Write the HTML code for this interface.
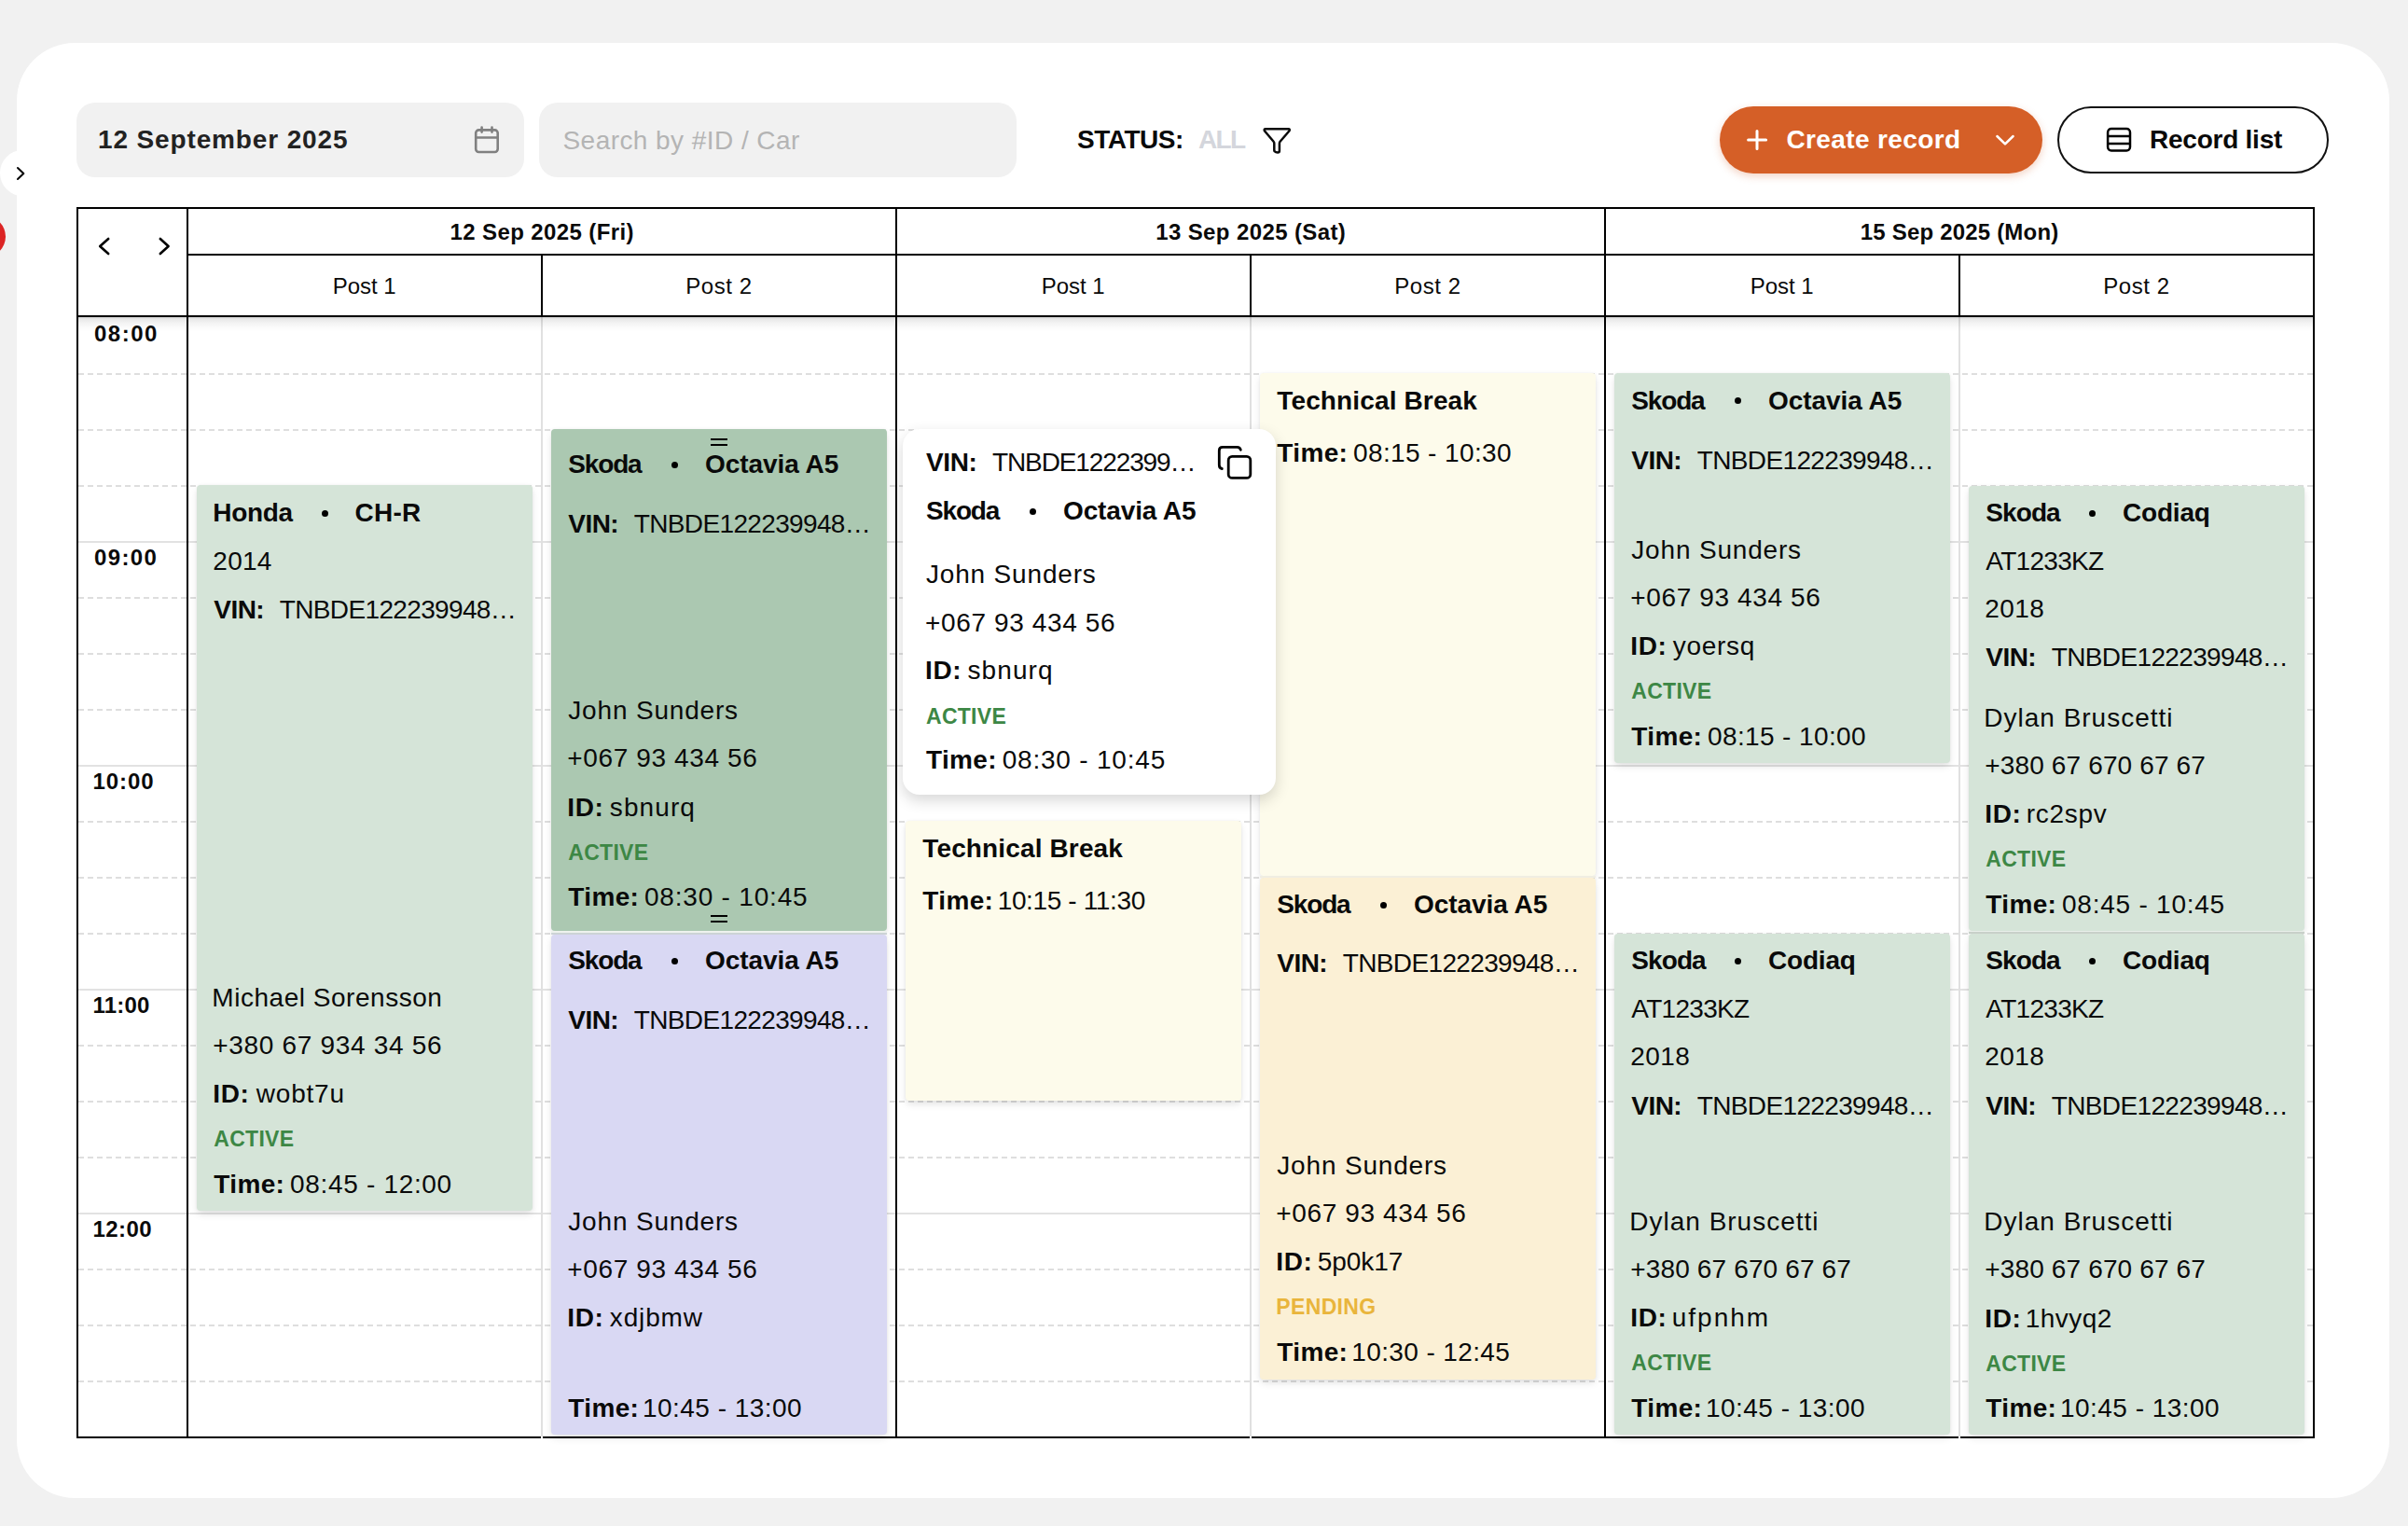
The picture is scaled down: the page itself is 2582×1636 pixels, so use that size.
<!DOCTYPE html>
<html><head><meta charset="utf-8"><title>Schedule</title>
<style>
html,body{margin:0;padding:0;}
body{width:2582px;height:1636px;background:#f1f1f1;position:relative;overflow:hidden;font-family:"Liberation Sans",sans-serif;color:#0a0a0a;}
.t{position:absolute;white-space:nowrap;}
.abs{position:absolute;}
.card{position:absolute;border-radius:4px;box-shadow:0 4px 8px -1px rgba(0,0,0,0.13), 0 0 3px rgba(0,0,0,0.05);}
.hl{position:absolute;height:2px;background:#000;}
.vl{position:absolute;width:2px;background:#000;}
</style></head><body>

<div class="abs" style="left:18px;top:46px;width:2544px;height:1560px;background:#fff;border-radius:62px;"></div>
<div class="abs" style="left:0px;top:161px;width:48px;height:49px;border-radius:50%;background:#fff;"></div>
<svg class="abs" style="left:0;top:0" width="60" height="300"><path d="M19 180 L25.3 186 L19 192" fill="none" stroke="#0a0a0a" stroke-width="2.1" stroke-linecap="round" stroke-linejoin="round"/><circle cx="-16" cy="253.6" r="22" fill="#dc2424"/></svg>
<div class="abs" style="left:82px;top:110px;width:480px;height:80px;background:#f1f1f1;border-radius:20px;"></div>
<div class="abs" style="left:578px;top:110px;width:512px;height:80px;background:#f1f1f1;border-radius:20px;"></div>
<svg class="abs" style="left:500px;top:128px" width="44" height="44"><g fill="none" stroke="#808080" stroke-width="2.6" stroke-linecap="round"><rect x="10.2" y="11.4" width="23.5" height="23.6" rx="3.2"/><path d="M10.2 19.5 H33.7 M16.6 8.6 V13.6 M27.5 8.6 V13.6"/></g></svg>
<svg class="abs" style="left:1345px;top:128px" width="48" height="44"><path d="M12 10.2 H36.6 Q38.4 10.2 37.5 12.2 L27.6 23.8 Q26.9 24.6 26.9 25.8 V33.6 Q26.9 35.6 25 35.6 Q22.9 35.6 21.6 34.2 Q21.3 33.8 21.3 33 V25.8 Q21.3 24.6 20.6 23.8 L10.9 12.2 Q10.1 10.2 12 10.2 Z" fill="none" stroke="#0a0a0a" stroke-width="2.5" stroke-linejoin="round"/></svg>
<div class="abs" style="left:1844px;top:114px;width:346px;height:72px;background:#d55f27;border-radius:36px;box-shadow:0 3px 8px rgba(213,95,39,0.28);"></div>
<svg class="abs" style="left:1860px;top:125px" width="320" height="50"><g fill="none" stroke="#fff" stroke-width="3" stroke-linecap="round" stroke-linejoin="round"><path d="M14.6 25 H33.6 M24 15.6 V34.4"/><path d="M281.4 21 L290 29.4 L298.6 21" stroke-width="2.5"/></g></svg>
<div class="abs" style="left:2206px;top:114px;width:287px;height:68px;border:2px solid #111;border-radius:36px;background:#fff;"></div>
<svg class="abs" style="left:2250px;top:128px" width="44" height="44"><g fill="none" stroke="#000" stroke-width="2.5"><rect x="10.1" y="10.1" width="23.9" height="23.3" rx="3.8"/><path d="M10.1 18 H34 M10.1 25.9 H34"/></g></svg>
<div class="abs" style="left:84px;top:400px;width:2396px;height:2px;background-image:linear-gradient(to right,#dedede 0,#dedede 6px,transparent 6px,transparent 10px);background-size:10px 2px;"></div>
<div class="abs" style="left:84px;top:460px;width:2396px;height:2px;background-image:linear-gradient(to right,#dedede 0,#dedede 6px,transparent 6px,transparent 10px);background-size:10px 2px;"></div>
<div class="abs" style="left:84px;top:520px;width:2396px;height:2px;background-image:linear-gradient(to right,#dedede 0,#dedede 6px,transparent 6px,transparent 10px);background-size:10px 2px;"></div>
<div class="abs" style="left:84px;top:580px;width:2396px;height:2px;background:#e2e2e2;"></div>
<div class="abs" style="left:84px;top:640px;width:2396px;height:2px;background-image:linear-gradient(to right,#dedede 0,#dedede 6px,transparent 6px,transparent 10px);background-size:10px 2px;"></div>
<div class="abs" style="left:84px;top:700px;width:2396px;height:2px;background-image:linear-gradient(to right,#dedede 0,#dedede 6px,transparent 6px,transparent 10px);background-size:10px 2px;"></div>
<div class="abs" style="left:84px;top:760px;width:2396px;height:2px;background-image:linear-gradient(to right,#dedede 0,#dedede 6px,transparent 6px,transparent 10px);background-size:10px 2px;"></div>
<div class="abs" style="left:84px;top:820px;width:2396px;height:2px;background:#e2e2e2;"></div>
<div class="abs" style="left:84px;top:880px;width:2396px;height:2px;background-image:linear-gradient(to right,#dedede 0,#dedede 6px,transparent 6px,transparent 10px);background-size:10px 2px;"></div>
<div class="abs" style="left:84px;top:940px;width:2396px;height:2px;background-image:linear-gradient(to right,#dedede 0,#dedede 6px,transparent 6px,transparent 10px);background-size:10px 2px;"></div>
<div class="abs" style="left:84px;top:1000px;width:2396px;height:2px;background-image:linear-gradient(to right,#dedede 0,#dedede 6px,transparent 6px,transparent 10px);background-size:10px 2px;"></div>
<div class="abs" style="left:84px;top:1060px;width:2396px;height:2px;background:#e2e2e2;"></div>
<div class="abs" style="left:84px;top:1120px;width:2396px;height:2px;background-image:linear-gradient(to right,#dedede 0,#dedede 6px,transparent 6px,transparent 10px);background-size:10px 2px;"></div>
<div class="abs" style="left:84px;top:1180px;width:2396px;height:2px;background-image:linear-gradient(to right,#dedede 0,#dedede 6px,transparent 6px,transparent 10px);background-size:10px 2px;"></div>
<div class="abs" style="left:84px;top:1240px;width:2396px;height:2px;background-image:linear-gradient(to right,#dedede 0,#dedede 6px,transparent 6px,transparent 10px);background-size:10px 2px;"></div>
<div class="abs" style="left:84px;top:1300px;width:2396px;height:2px;background:#e2e2e2;"></div>
<div class="abs" style="left:84px;top:1360px;width:2396px;height:2px;background-image:linear-gradient(to right,#dedede 0,#dedede 6px,transparent 6px,transparent 10px);background-size:10px 2px;"></div>
<div class="abs" style="left:84px;top:1420px;width:2396px;height:2px;background-image:linear-gradient(to right,#dedede 0,#dedede 6px,transparent 6px,transparent 10px);background-size:10px 2px;"></div>
<div class="abs" style="left:84px;top:1480px;width:2396px;height:2px;background-image:linear-gradient(to right,#dedede 0,#dedede 6px,transparent 6px,transparent 10px);background-size:10px 2px;"></div>
<div class="abs" style="left:580px;top:340px;width:2px;height:1200px;background:#e0e0e0;"></div>
<div class="abs" style="left:1340px;top:340px;width:2px;height:1200px;background:#e0e0e0;"></div>
<div class="abs" style="left:2100px;top:340px;width:2px;height:1200px;background:#e0e0e0;"></div>
<div class="abs" style="left:84px;top:340px;width:2396px;height:16px;background:linear-gradient(to bottom,rgba(0,0,0,0.18) 0,rgba(0,0,0,0.09) 2px,rgba(0,0,0,0.05) 6px,rgba(0,0,0,0.015) 11px,rgba(0,0,0,0) 16px);"></div>
<div class="abs" style="left:82px;top:222px;width:2400px;height:1320px;border:2px solid #000;box-sizing:border-box;"></div>
<div class="vl" style="left:200px;top:222px;height:1320px;"></div>
<div class="vl" style="left:960px;top:222px;height:1320px;"></div>
<div class="vl" style="left:1720px;top:222px;height:1320px;"></div>
<div class="hl" style="left:200px;top:272px;width:2281px;"></div>
<div class="hl" style="left:82px;top:338px;width:2399px;"></div>
<div class="vl" style="left:580px;top:272px;height:68px;"></div>
<div class="vl" style="left:1340px;top:272px;height:68px;"></div>
<div class="vl" style="left:2100px;top:272px;height:68px;"></div>
<div class="abs" style="left:580px;top:1540px;width:2px;height:2px;background:#fff;"></div>
<div class="abs" style="left:1340px;top:1540px;width:2px;height:2px;background:#fff;"></div>
<div class="abs" style="left:2100px;top:1540px;width:2px;height:2px;background:#fff;"></div>
<svg class="abs" style="left:90px;top:240px" width="110" height="50"><g fill="none" stroke="#000" stroke-width="2.6" stroke-linecap="round" stroke-linejoin="round"><path d="M26.2 16 L17.2 24 L26.2 32"/><path d="M81.8 16 L90.6 24 L81.8 32"/></g></svg>
<div class="card" style="left:211.0px;top:520px;width:360px;height:778px;background:#d5e4d8;"></div>
<div class="card" style="left:591.0px;top:460px;width:360px;height:538px;background:#abc8b1;"></div>
<div class="card" style="left:591.0px;top:1002px;width:360px;height:536px;background:#d9d8f3;"></div>
<div class="card" style="left:971.0px;top:880px;width:360px;height:300px;background:#fdfbeb;"></div>
<div class="card" style="left:1351.0px;top:400px;width:360px;height:539px;background:#fdfbeb;"></div>
<div class="card" style="left:1351.0px;top:941px;width:360px;height:538px;background:#fbf0d5;"></div>
<div class="card" style="left:1731.0px;top:400px;width:360px;height:418px;background:#d5e4d8;"></div>
<div class="card" style="left:1731.0px;top:1001px;width:360px;height:537px;background:#d5e4d8;"></div>
<div class="card" style="left:2111.0px;top:521px;width:360px;height:477px;background:#d5e4d8;"></div>
<div class="card" style="left:2111.0px;top:1001px;width:360px;height:537px;background:#d5e4d8;"></div>
<div class="abs" style="left:591px;top:998px;width:360px;height:4px;background:linear-gradient(to bottom,#eef2ee 0,#eef2ee 50%,#cdd3d6 50%,#cdd3d6 100%);"></div>
<div class="abs" style="left:2111px;top:998px;width:360px;height:3px;background:linear-gradient(to bottom,#e9efea 0,#e9efea 40%,#c8d0c9 40%,#c8d0c9 100%);"></div>
<div class="abs" style="left:1351px;top:939px;width:360px;height:2px;background:#f0eee2;"></div>
<div class="abs" style="left:968px;top:460px;width:400px;height:392px;background:#fff;border-radius:18px;box-shadow:0 6px 16px rgba(0,0,0,0.16);"></div>
<div class="abs" style="left:762.0px;top:470px;width:18px;height:2px;background:#000;"></div>
<div class="abs" style="left:762.0px;top:476px;width:18px;height:2px;background:#000;"></div>
<div class="abs" style="left:762.0px;top:981px;width:18px;height:2px;background:#000;"></div>
<div class="abs" style="left:762.0px;top:987px;width:18px;height:2px;background:#000;"></div>
<div class="abs" style="left:345.0px;top:546.5px;width:7px;height:7px;border-radius:50%;background:#000;"></div>
<div class="abs" style="left:720.0px;top:494.5px;width:7px;height:7px;border-radius:50%;background:#000;"></div>
<div class="abs" style="left:720.0px;top:1026.5px;width:7px;height:7px;border-radius:50%;background:#000;"></div>
<div class="abs" style="left:1480.0px;top:966.5px;width:7px;height:7px;border-radius:50%;background:#000;"></div>
<div class="abs" style="left:1860.0px;top:426.0px;width:7px;height:7px;border-radius:50%;background:#000;"></div>
<div class="abs" style="left:1860.0px;top:1026.5px;width:7px;height:7px;border-radius:50%;background:#000;"></div>
<div class="abs" style="left:2240.0px;top:546.5px;width:7px;height:7px;border-radius:50%;background:#000;"></div>
<div class="abs" style="left:2240.0px;top:1026.5px;width:7px;height:7px;border-radius:50%;background:#000;"></div>
<div class="abs" style="left:1103.5px;top:544.5px;width:7px;height:7px;border-radius:50%;background:#000;"></div>
<svg class="abs" style="left:1295px;top:465px" width="60" height="60"><g fill="none" stroke="#000" stroke-width="2.8" stroke-linecap="round"><rect x="22.2" y="24.4" width="23.6" height="23" rx="4"/><path d="M15.3 37.5 Q12.3 37 12.3 33.5 V18 Q12.3 14.3 16 14.3 H31.5 Q34.6 14.3 35.3 17.3"/></g></svg>
<div class="t" style="left:105.00px;top:136.00px;font-size:28px;line-height:28px;font-weight:700;letter-spacing:0.866px;color:#222;">12 September 2025</div>
<div class="t" style="left:603.50px;top:137.00px;font-size:28px;line-height:28px;letter-spacing:0.442px;color:#b4b4b4;">Search by #ID / Car</div>
<div class="t" style="left:1155.00px;top:136.00px;font-size:28px;line-height:28px;font-weight:700;letter-spacing:-0.474px;">STATUS:</div>
<div class="t" style="left:1285.00px;top:136.00px;font-size:28px;line-height:28px;font-weight:700;letter-spacing:-1.662px;color:#d4d6dc;">ALL</div>
<div class="t" style="left:1915.50px;top:136.00px;font-size:28px;line-height:28px;font-weight:700;letter-spacing:0.377px;color:#fff;">Create record</div>
<div class="t" style="left:2305.00px;top:136.00px;font-size:28px;line-height:28px;font-weight:700;letter-spacing:-0.238px;">Record list</div>
<div class="t" style="left:482.50px;top:237.00px;font-size:24px;line-height:24px;font-weight:700;letter-spacing:0.390px;">12 Sep 2025 (Fri)</div>
<div class="t" style="left:1239.15px;top:237.00px;font-size:24px;line-height:24px;font-weight:700;letter-spacing:0.391px;">13 Sep 2025 (Sat)</div>
<div class="t" style="left:1994.75px;top:237.00px;font-size:24px;line-height:24px;font-weight:700;letter-spacing:0.193px;">15 Sep 2025 (Mon)</div>
<div class="t" style="left:356.80px;top:295.00px;font-size:24px;line-height:24px;letter-spacing:-0.058px;">Post 1</div>
<div class="t" style="left:735.20px;top:295.00px;font-size:24px;line-height:24px;letter-spacing:0.582px;">Post 2</div>
<div class="t" style="left:1116.80px;top:295.00px;font-size:24px;line-height:24px;letter-spacing:-0.058px;">Post 1</div>
<div class="t" style="left:1495.20px;top:295.00px;font-size:24px;line-height:24px;letter-spacing:0.582px;">Post 2</div>
<div class="t" style="left:1876.80px;top:295.00px;font-size:24px;line-height:24px;letter-spacing:-0.058px;">Post 1</div>
<div class="t" style="left:2255.20px;top:295.00px;font-size:24px;line-height:24px;letter-spacing:0.582px;">Post 2</div>
<div class="t" style="left:101.00px;top:346.00px;font-size:24px;line-height:24px;font-weight:700;letter-spacing:1.491px;">08:00</div>
<div class="t" style="left:101.00px;top:586.00px;font-size:24px;line-height:24px;font-weight:700;letter-spacing:1.366px;">09:00</div>
<div class="t" style="left:99.60px;top:826.00px;font-size:24px;line-height:24px;font-weight:700;letter-spacing:0.916px;">10:00</div>
<div class="t" style="left:99.60px;top:1066.00px;font-size:24px;line-height:24px;font-weight:700;letter-spacing:0.147px;">11:00</div>
<div class="t" style="left:99.60px;top:1306.00px;font-size:24px;line-height:24px;font-weight:700;letter-spacing:0.391px;">12:00</div>
<div class="t" style="left:228.30px;top:536.00px;font-size:28px;line-height:28px;font-weight:700;letter-spacing:-0.308px;">Honda</div>
<div class="t" style="left:380.50px;top:536.00px;font-size:28px;line-height:28px;font-weight:700;letter-spacing:0.245px;">CH-R</div>
<div class="t" style="left:228.30px;top:588.00px;font-size:28px;line-height:28px;letter-spacing:0.261px;">2014</div>
<div class="t" style="left:229.30px;top:640.00px;font-size:28px;line-height:28px;font-weight:700;letter-spacing:-0.559px;">VIN:</div>
<div class="t" style="left:299.80px;top:640.00px;font-size:28px;line-height:28px;letter-spacing:-0.646px;">TNBDE122239948…</div>
<div class="t" style="left:227.30px;top:1056.00px;font-size:28px;line-height:28px;letter-spacing:0.528px;">Michael Sorensson</div>
<div class="t" style="left:228.30px;top:1107.00px;font-size:28px;line-height:28px;letter-spacing:0.677px;">+380 67 934 34 56</div>
<div class="t" style="left:228.30px;top:1159.00px;font-size:28px;line-height:28px;font-weight:700;letter-spacing:0.650px;">ID:</div>
<div class="t" style="left:274.80px;top:1159.00px;font-size:28px;line-height:28px;letter-spacing:0.777px;">wobt7u</div>
<div class="t" style="left:229.30px;top:1210.00px;font-size:23px;line-height:23px;font-weight:700;letter-spacing:0.280px;color:#3d8745;">ACTIVE</div>
<div class="t" style="left:229.30px;top:1256.00px;font-size:28px;line-height:28px;font-weight:700;letter-spacing:0.364px;">Time:</div>
<div class="t" style="left:311.00px;top:1256.00px;font-size:28px;line-height:28px;letter-spacing:0.679px;">08:45 - 12:00</div>
<div class="t" style="left:609.30px;top:484.00px;font-size:28px;line-height:28px;font-weight:700;letter-spacing:-1.164px;">Skoda</div>
<div class="t" style="left:755.90px;top:484.00px;font-size:28px;line-height:28px;font-weight:700;letter-spacing:-0.041px;">Octavia A5</div>
<div class="t" style="left:609.30px;top:548.00px;font-size:28px;line-height:28px;font-weight:700;letter-spacing:-0.559px;">VIN:</div>
<div class="t" style="left:679.80px;top:548.00px;font-size:28px;line-height:28px;letter-spacing:-0.646px;">TNBDE122239948…</div>
<div class="t" style="left:609.30px;top:748.00px;font-size:28px;line-height:28px;letter-spacing:0.820px;">John Sunders</div>
<div class="t" style="left:608.30px;top:799.00px;font-size:28px;line-height:28px;letter-spacing:0.628px;">+067 93 434 56</div>
<div class="t" style="left:608.30px;top:852.00px;font-size:28px;line-height:28px;font-weight:700;letter-spacing:0.650px;">ID:</div>
<div class="t" style="left:653.80px;top:852.00px;font-size:28px;line-height:28px;letter-spacing:1.092px;">sbnurq</div>
<div class="t" style="left:609.30px;top:903.00px;font-size:23px;line-height:23px;font-weight:700;letter-spacing:0.280px;color:#3d8745;">ACTIVE</div>
<div class="t" style="left:609.30px;top:948.00px;font-size:28px;line-height:28px;font-weight:700;letter-spacing:0.364px;">Time:</div>
<div class="t" style="left:691.00px;top:948.00px;font-size:28px;line-height:28px;letter-spacing:0.796px;">08:30 - 10:45</div>
<div class="t" style="left:609.30px;top:1016.00px;font-size:28px;line-height:28px;font-weight:700;letter-spacing:-1.164px;">Skoda</div>
<div class="t" style="left:755.90px;top:1016.00px;font-size:28px;line-height:28px;font-weight:700;letter-spacing:-0.041px;">Octavia A5</div>
<div class="t" style="left:609.30px;top:1080.00px;font-size:28px;line-height:28px;font-weight:700;letter-spacing:-0.559px;">VIN:</div>
<div class="t" style="left:679.80px;top:1080.00px;font-size:28px;line-height:28px;letter-spacing:-0.646px;">TNBDE122239948…</div>
<div class="t" style="left:609.30px;top:1296.00px;font-size:28px;line-height:28px;letter-spacing:0.820px;">John Sunders</div>
<div class="t" style="left:608.30px;top:1347.00px;font-size:28px;line-height:28px;letter-spacing:0.628px;">+067 93 434 56</div>
<div class="t" style="left:608.30px;top:1399.00px;font-size:28px;line-height:28px;font-weight:700;letter-spacing:0.650px;">ID:</div>
<div class="t" style="left:653.80px;top:1399.00px;font-size:28px;line-height:28px;letter-spacing:0.862px;">xdjbmw</div>
<div class="t" style="left:609.30px;top:1496.00px;font-size:28px;line-height:28px;font-weight:700;letter-spacing:0.364px;">Time:</div>
<div class="t" style="left:689.00px;top:1496.00px;font-size:28px;line-height:28px;letter-spacing:0.463px;">10:45 - 13:00</div>
<div class="t" style="left:989.30px;top:896.00px;font-size:28px;line-height:28px;font-weight:700;letter-spacing:0.134px;">Technical Break</div>
<div class="t" style="left:989.30px;top:952.00px;font-size:28px;line-height:28px;font-weight:700;letter-spacing:0.364px;">Time:</div>
<div class="t" style="left:1069.70px;top:952.00px;font-size:28px;line-height:28px;letter-spacing:-0.364px;">10:15 - 11:30</div>
<div class="t" style="left:1369.30px;top:416.00px;font-size:28px;line-height:28px;font-weight:700;letter-spacing:0.134px;">Technical Break</div>
<div class="t" style="left:1369.30px;top:472.00px;font-size:28px;line-height:28px;font-weight:700;letter-spacing:0.364px;">Time:</div>
<div class="t" style="left:1451.00px;top:472.00px;font-size:28px;line-height:28px;letter-spacing:0.379px;">08:15 - 10:30</div>
<div class="t" style="left:1369.30px;top:956.00px;font-size:28px;line-height:28px;font-weight:700;letter-spacing:-1.164px;">Skoda</div>
<div class="t" style="left:1515.90px;top:956.00px;font-size:28px;line-height:28px;font-weight:700;letter-spacing:-0.041px;">Octavia A5</div>
<div class="t" style="left:1369.30px;top:1019.00px;font-size:28px;line-height:28px;font-weight:700;letter-spacing:-0.559px;">VIN:</div>
<div class="t" style="left:1439.80px;top:1019.00px;font-size:28px;line-height:28px;letter-spacing:-0.646px;">TNBDE122239948…</div>
<div class="t" style="left:1369.30px;top:1236.00px;font-size:28px;line-height:28px;letter-spacing:0.820px;">John Sunders</div>
<div class="t" style="left:1368.30px;top:1287.00px;font-size:28px;line-height:28px;letter-spacing:0.628px;">+067 93 434 56</div>
<div class="t" style="left:1368.30px;top:1339.00px;font-size:28px;line-height:28px;font-weight:700;letter-spacing:0.650px;">ID:</div>
<div class="t" style="left:1412.80px;top:1339.00px;font-size:28px;line-height:28px;letter-spacing:-0.058px;">5p0k17</div>
<div class="t" style="left:1368.30px;top:1390.00px;font-size:23px;line-height:23px;font-weight:700;letter-spacing:0.350px;color:#e9b53c;">PENDING</div>
<div class="t" style="left:1369.30px;top:1436.00px;font-size:28px;line-height:28px;font-weight:700;letter-spacing:0.364px;">Time:</div>
<div class="t" style="left:1449.30px;top:1436.00px;font-size:28px;line-height:28px;letter-spacing:0.379px;">10:30 - 12:45</div>
<div class="t" style="left:1749.30px;top:415.50px;font-size:28px;line-height:28px;font-weight:700;letter-spacing:-1.164px;">Skoda</div>
<div class="t" style="left:1895.90px;top:415.50px;font-size:28px;line-height:28px;font-weight:700;letter-spacing:-0.041px;">Octavia A5</div>
<div class="t" style="left:1749.30px;top:480.00px;font-size:28px;line-height:28px;font-weight:700;letter-spacing:-0.559px;">VIN:</div>
<div class="t" style="left:1819.80px;top:480.00px;font-size:28px;line-height:28px;letter-spacing:-0.646px;">TNBDE122239948…</div>
<div class="t" style="left:1749.30px;top:576.00px;font-size:28px;line-height:28px;letter-spacing:0.820px;">John Sunders</div>
<div class="t" style="left:1748.30px;top:627.00px;font-size:28px;line-height:28px;letter-spacing:0.628px;">+067 93 434 56</div>
<div class="t" style="left:1748.30px;top:679.00px;font-size:28px;line-height:28px;font-weight:700;letter-spacing:0.650px;">ID:</div>
<div class="t" style="left:1793.80px;top:679.00px;font-size:28px;line-height:28px;letter-spacing:0.706px;">yoersq</div>
<div class="t" style="left:1749.30px;top:730.00px;font-size:23px;line-height:23px;font-weight:700;letter-spacing:0.280px;color:#3d8745;">ACTIVE</div>
<div class="t" style="left:1749.30px;top:776.00px;font-size:28px;line-height:28px;font-weight:700;letter-spacing:0.364px;">Time:</div>
<div class="t" style="left:1831.00px;top:776.00px;font-size:28px;line-height:28px;letter-spacing:0.379px;">08:15 - 10:00</div>
<div class="t" style="left:1749.30px;top:1016.00px;font-size:28px;line-height:28px;font-weight:700;letter-spacing:-0.914px;">Skoda</div>
<div class="t" style="left:1896.10px;top:1016.00px;font-size:28px;line-height:28px;font-weight:700;letter-spacing:-0.216px;">Codiaq</div>
<div class="t" style="left:1749.30px;top:1067.50px;font-size:28px;line-height:28px;letter-spacing:-0.709px;">AT1233KZ</div>
<div class="t" style="left:1748.30px;top:1119.00px;font-size:28px;line-height:28px;letter-spacing:0.428px;">2018</div>
<div class="t" style="left:1749.30px;top:1171.70px;font-size:28px;line-height:28px;font-weight:700;letter-spacing:-0.559px;">VIN:</div>
<div class="t" style="left:1819.80px;top:1171.70px;font-size:28px;line-height:28px;letter-spacing:-0.646px;">TNBDE122239948…</div>
<div class="t" style="left:1747.30px;top:1296.00px;font-size:28px;line-height:28px;letter-spacing:0.995px;">Dylan Bruscetti</div>
<div class="t" style="left:1748.30px;top:1347.00px;font-size:28px;line-height:28px;letter-spacing:0.140px;">+380 67 670 67 67</div>
<div class="t" style="left:1748.30px;top:1399.00px;font-size:28px;line-height:28px;font-weight:700;letter-spacing:0.650px;">ID:</div>
<div class="t" style="left:1792.80px;top:1399.00px;font-size:28px;line-height:28px;letter-spacing:1.986px;">ufpnhm</div>
<div class="t" style="left:1749.30px;top:1450.40px;font-size:23px;line-height:23px;font-weight:700;letter-spacing:0.280px;color:#3d8745;">ACTIVE</div>
<div class="t" style="left:1749.30px;top:1496.00px;font-size:28px;line-height:28px;font-weight:700;letter-spacing:0.364px;">Time:</div>
<div class="t" style="left:1829.00px;top:1496.00px;font-size:28px;line-height:28px;letter-spacing:0.463px;">10:45 - 13:00</div>
<div class="t" style="left:2129.30px;top:536.00px;font-size:28px;line-height:28px;font-weight:700;letter-spacing:-0.914px;">Skoda</div>
<div class="t" style="left:2276.10px;top:536.00px;font-size:28px;line-height:28px;font-weight:700;letter-spacing:-0.216px;">Codiaq</div>
<div class="t" style="left:2129.30px;top:588.00px;font-size:28px;line-height:28px;letter-spacing:-0.709px;">AT1233KZ</div>
<div class="t" style="left:2128.30px;top:639.40px;font-size:28px;line-height:28px;letter-spacing:0.428px;">2018</div>
<div class="t" style="left:2129.30px;top:691.40px;font-size:28px;line-height:28px;font-weight:700;letter-spacing:-0.559px;">VIN:</div>
<div class="t" style="left:2199.80px;top:691.40px;font-size:28px;line-height:28px;letter-spacing:-0.646px;">TNBDE122239948…</div>
<div class="t" style="left:2127.30px;top:756.00px;font-size:28px;line-height:28px;letter-spacing:0.995px;">Dylan Bruscetti</div>
<div class="t" style="left:2128.30px;top:807.30px;font-size:28px;line-height:28px;letter-spacing:0.140px;">+380 67 670 67 67</div>
<div class="t" style="left:2128.30px;top:859.20px;font-size:28px;line-height:28px;font-weight:700;letter-spacing:0.650px;">ID:</div>
<div class="t" style="left:2172.80px;top:859.20px;font-size:28px;line-height:28px;letter-spacing:0.706px;">rc2spv</div>
<div class="t" style="left:2129.30px;top:910.40px;font-size:23px;line-height:23px;font-weight:700;letter-spacing:0.280px;color:#3d8745;">ACTIVE</div>
<div class="t" style="left:2129.30px;top:956.00px;font-size:28px;line-height:28px;font-weight:700;letter-spacing:0.364px;">Time:</div>
<div class="t" style="left:2211.00px;top:956.00px;font-size:28px;line-height:28px;letter-spacing:0.763px;">08:45 - 10:45</div>
<div class="t" style="left:2129.30px;top:1016.00px;font-size:28px;line-height:28px;font-weight:700;letter-spacing:-0.914px;">Skoda</div>
<div class="t" style="left:2276.10px;top:1016.00px;font-size:28px;line-height:28px;font-weight:700;letter-spacing:-0.216px;">Codiaq</div>
<div class="t" style="left:2129.30px;top:1067.50px;font-size:28px;line-height:28px;letter-spacing:-0.709px;">AT1233KZ</div>
<div class="t" style="left:2128.30px;top:1119.00px;font-size:28px;line-height:28px;letter-spacing:0.428px;">2018</div>
<div class="t" style="left:2129.30px;top:1171.70px;font-size:28px;line-height:28px;font-weight:700;letter-spacing:-0.559px;">VIN:</div>
<div class="t" style="left:2199.80px;top:1171.70px;font-size:28px;line-height:28px;letter-spacing:-0.646px;">TNBDE122239948…</div>
<div class="t" style="left:2127.30px;top:1296.00px;font-size:28px;line-height:28px;letter-spacing:0.995px;">Dylan Bruscetti</div>
<div class="t" style="left:2128.30px;top:1347.00px;font-size:28px;line-height:28px;letter-spacing:0.140px;">+380 67 670 67 67</div>
<div class="t" style="left:2128.30px;top:1399.50px;font-size:28px;line-height:28px;font-weight:700;letter-spacing:0.650px;">ID:</div>
<div class="t" style="left:2171.80px;top:1399.50px;font-size:28px;line-height:28px;letter-spacing:0.457px;">1hvyq2</div>
<div class="t" style="left:2129.30px;top:1450.60px;font-size:23px;line-height:23px;font-weight:700;letter-spacing:0.280px;color:#3d8745;">ACTIVE</div>
<div class="t" style="left:2129.30px;top:1495.70px;font-size:28px;line-height:28px;font-weight:700;letter-spacing:0.364px;">Time:</div>
<div class="t" style="left:2209.00px;top:1495.70px;font-size:28px;line-height:28px;letter-spacing:0.463px;">10:45 - 13:00</div>
<div class="t" style="left:993.00px;top:482.00px;font-size:28px;line-height:28px;font-weight:700;letter-spacing:-0.392px;">VIN:</div>
<div class="t" style="left:1064.00px;top:482.00px;font-size:28px;line-height:28px;letter-spacing:-1.117px;">TNBDE1222399…</div>
<div class="t" style="left:993.00px;top:534.00px;font-size:28px;line-height:28px;font-weight:700;letter-spacing:-1.164px;">Skoda</div>
<div class="t" style="left:1140.00px;top:534.00px;font-size:28px;line-height:28px;font-weight:700;letter-spacing:-0.130px;">Octavia A5</div>
<div class="t" style="left:993.00px;top:602.00px;font-size:28px;line-height:28px;letter-spacing:0.820px;">John Sunders</div>
<div class="t" style="left:992.00px;top:653.60px;font-size:28px;line-height:28px;letter-spacing:0.628px;">+067 93 434 56</div>
<div class="t" style="left:992.00px;top:705.40px;font-size:28px;line-height:28px;font-weight:700;letter-spacing:0.650px;">ID:</div>
<div class="t" style="left:1037.50px;top:705.40px;font-size:28px;line-height:28px;letter-spacing:1.092px;">sbnurq</div>
<div class="t" style="left:993.00px;top:756.70px;font-size:23px;line-height:23px;font-weight:700;letter-spacing:0.280px;color:#3d8745;">ACTIVE</div>
<div class="t" style="left:993.00px;top:801.30px;font-size:28px;line-height:28px;font-weight:700;letter-spacing:0.364px;">Time:</div>
<div class="t" style="left:1074.70px;top:801.30px;font-size:28px;line-height:28px;letter-spacing:0.796px;">08:30 - 10:45</div>
</body></html>
